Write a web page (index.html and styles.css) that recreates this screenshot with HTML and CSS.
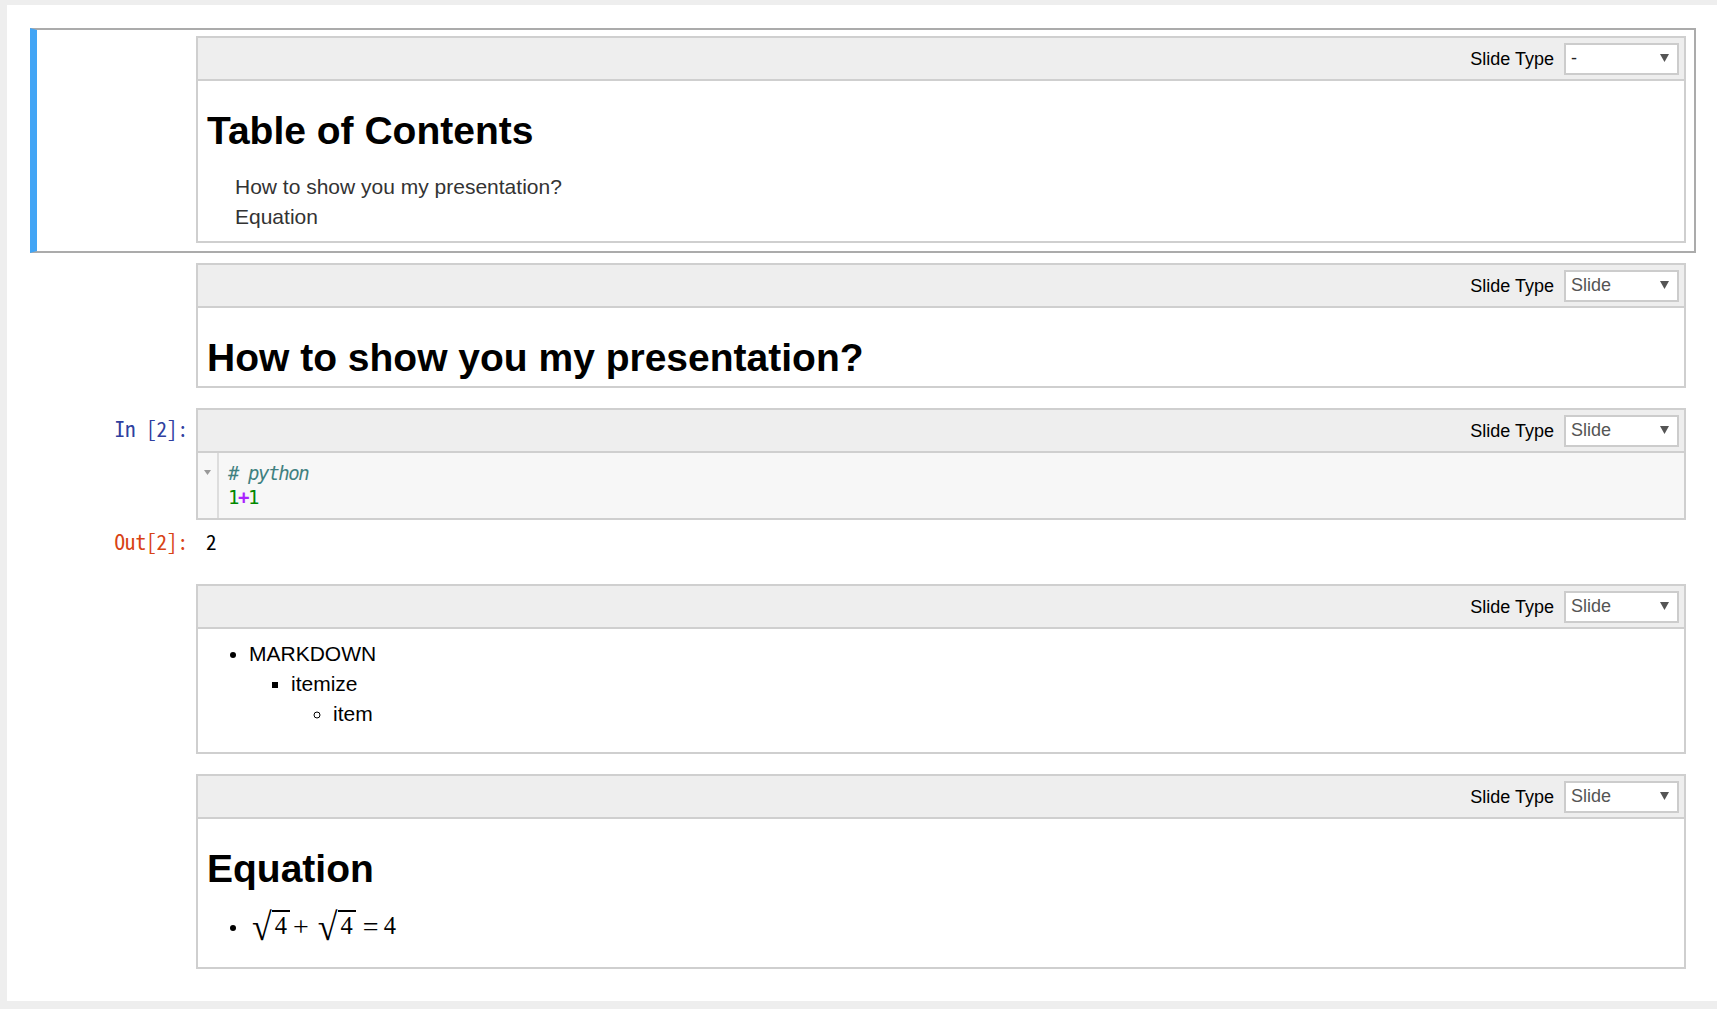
FILE: index.html
```html
<!DOCTYPE html>
<html>
<head>
<meta charset="utf-8">
<title>Notebook</title>
<link rel="stylesheet" href="styles.css">
</head>
<body>
<div class="notebook">

  <div class="cell selected">
    <div class="row">
      <div class="prompt"></div>
      <div class="box">
        <div class="toolbar">
          <span class="tb-label">Slide Type</span>
          <div class="select"><span class="sel-val dark">-</span><svg class="caret" width="9" height="8" viewBox="0 0 9 8"><polygon points="0,0 9,0 4.5,8" fill="#555"/></svg></div>
        </div>
        <div class="md md-toc">
          <h1 class="h1-toc">Table of Contents</h1>
          <ul class="toc">
            <li>How to show you my presentation?</li>
            <li>Equation</li>
          </ul>
        </div>
      </div>
    </div>
  </div>

  <div class="cell">
    <div class="row">
      <div class="prompt"></div>
      <div class="box">
        <div class="toolbar">
          <span class="tb-label">Slide Type</span>
          <div class="select"><span class="sel-val">Slide</span><svg class="caret" width="9" height="8" viewBox="0 0 9 8"><polygon points="0,0 9,0 4.5,8" fill="#555"/></svg></div>
        </div>
        <div class="md">
          <h1>How to show you my presentation?</h1>
        </div>
      </div>
    </div>
  </div>

  <div class="cell">
    <div class="row">
      <div class="prompt prompt-in">In&nbsp;[2]:</div>
      <div class="box">
        <div class="toolbar">
          <span class="tb-label">Slide Type</span>
          <div class="select"><span class="sel-val">Slide</span><svg class="caret" width="9" height="8" viewBox="0 0 9 8"><polygon points="0,0 9,0 4.5,8" fill="#555"/></svg></div>
        </div>
        <div class="code">
          <div class="gutter"><svg class="fold" width="7" height="5" viewBox="0 0 7 5"><polygon points="0,0 7,0 3.5,5" fill="#999"/></svg></div>
          <div class="code-text"><div class="cm-line"><span class="cm-comment"># python</span></div><div class="cm-line"><span class="cm-num">1</span><span class="cm-op">+</span><span class="cm-num">1</span></div></div>
        </div>
      </div>
    </div>
    <div class="row out-row">
      <div class="prompt prompt-out">Out[2]:</div>
      <div class="out">2</div>
    </div>
  </div>

  <div class="cell">
    <div class="row">
      <div class="prompt"></div>
      <div class="box">
        <div class="toolbar">
          <span class="tb-label">Slide Type</span>
          <div class="select"><span class="sel-val">Slide</span><svg class="caret" width="9" height="8" viewBox="0 0 9 8"><polygon points="0,0 9,0 4.5,8" fill="#555"/></svg></div>
        </div>
        <div class="md">
          <ul class="list">
            <li>MARKDOWN
              <ul class="sq-list">
                <li>itemize
                  <ul class="ci-list">
                    <li>item</li>
                  </ul>
                </li>
              </ul>
            </li>
          </ul>
        </div>
      </div>
    </div>
  </div>

  <div class="cell">
    <div class="row">
      <div class="prompt"></div>
      <div class="box">
        <div class="toolbar">
          <span class="tb-label">Slide Type</span>
          <div class="select"><span class="sel-val">Slide</span><svg class="caret" width="9" height="8" viewBox="0 0 9 8"><polygon points="0,0 9,0 4.5,8" fill="#555"/></svg></div>
        </div>
        <div class="md">
          <h1>Equation</h1>
          <ul class="eq">
            <li><span class="math"><span class="sq"><span class="surd">√</span><span class="rad">4</span></span><span class="bin">+</span><span class="sq"><span class="surd">√</span><span class="rad">4</span></span><span class="rel">=</span><span class="num">4</span></span></li>
          </ul>
        </div>
      </div>
    </div>
  </div>

</div>
</body>
</html>
```

FILE: styles.css
```css
* {
  box-sizing: border-box;
}

html,
body {
  margin: 0;
  padding: 0;
  height: 100%;
  background: #eee;
  overflow: hidden;
}

body {
  font-family: "Liberation Sans", Arial, sans-serif;
  font-size: 21px;
  line-height: 30px;
  color: #000;
}

.notebook {
  width: 1711px;
  margin: 5px 0 0 7px;
  background: #fff;
  padding: 23px 22px 22px 23px;
}

.cell {
  border: 2px solid transparent;
  border-left-width: 7px;
  padding: 8px 8px 8px 7px;
}

.cell.selected {
  border-color: #ababab;
  border-left-color: #42a5f5;
  padding-top: 6px;
}

.row {
  display: flex;
}

.prompt {
  width: 152px;
  flex: none;
  padding-right: 8px;
  text-align: right;
  font-family: "Noto Sans Mono CJK KR", "Liberation Mono", monospace;
  font-size: 21px;
  line-height: 24px;
}

.prompt-in {
  color: #303f9f;
  padding-top: 8px;
}

.prompt-out {
  color: #d84315;
}

.box {
  flex: 1;
  min-width: 0;
  border: 2px solid #cfcfcf;
  background: #fff;
}

.toolbar {
  height: 43px;
  background: #eee;
  border-bottom: 2px solid #cfcfcf;
  display: flex;
  align-items: center;
  justify-content: flex-end;
  gap: 10px;
  padding-right: 5px;
}

.tb-label {
  font-size: 18px;
  line-height: 20px;
  color: #000;
}

.select {
  width: 115px;
  height: 32px;
  border: 2px solid #ccc;
  background: #fff;
  display: flex;
  align-items: center;
  justify-content: space-between;
  padding: 0 8px 2px 5px;
  font-size: 18px;
  line-height: 20px;
  color: #555;
}

.sel-val.dark {
  color: #222;
}

.caret {
  display: block;
  margin-top: 1px;
}

.md {
  padding: 8px 8px 7px 9px;
}

.md-toc {
  padding-bottom: 9px;
}

h1 {
  font-size: 39px;
  line-height: 43px;
  font-weight: bold;
  margin: 20px 0 0;
}

.h1-toc {
  margin-top: 20px;
}

.toc {
  list-style: none;
  margin: 20px 0 0;
  padding: 0 0 0 28px;
  color: #333;
}

.list {
  margin: 2px 0 16px;
  padding-left: 42px;
  list-style-type: disc;
}

.sq-list {
  margin: 0;
  padding-left: 42px;
  list-style-type: square;
}

.ci-list {
  margin: 0;
  padding-left: 42px;
  list-style-type: circle;
}

.code {
  display: flex;
  background: #f7f7f7;
}

.gutter {
  width: 21px;
  flex: none;
  border-right: 2px solid #ddd;
}

.fold {
  display: block;
  margin: 17px 0 0 6px;
}

.code-text {
  padding: 8px 0 9px 9px;
  font-family: "DejaVu Sans Mono", "Liberation Mono", monospace;
  font-size: 19px;
  line-height: 24px;
  letter-spacing: -1.4px;
}

.cm-line {
  height: 24px;
}

.cm-comment {
  color: #408080;
  font-style: italic;
}

.cm-num {
  color: #080;
}

.cm-op {
  color: #a2f;
  font-weight: bold;
}

.out-row {
  padding: 9px 0 11px;
}

.out {
  padding-left: 10px;
  font-family: "Noto Sans Mono CJK KR", "Liberation Mono", monospace;
  font-size: 21px;
  line-height: 24px;
  color: #000;
}

.eq {
  margin: 21px 0 18px;
  padding-left: 42px;
  list-style-type: disc;
}

.math {
  display: inline-block;
  margin-left: 3px;
  font-family: "Liberation Serif", "DejaVu Serif", serif;
  font-size: 24.5px;
  white-space: nowrap;
}

.math span {
  line-height: 20px;
}

.sq {
  display: inline-block;
  white-space: nowrap;
}

.surd {
  display: inline-block;
  font-size: 36px;
  transform: translateY(5px) scaleY(1.08);
}

.rad {
  border-top: 2px solid #000;
  padding: 0 3px 0 3px;
}

.bin {
  font-size: 28px;
  vertical-align: -2px;
  margin: 0 9px 0 3px;
}

.rel {
  font-size: 28px;
  vertical-align: -2px;
  margin: 0 5px 0 7px;
}
```
